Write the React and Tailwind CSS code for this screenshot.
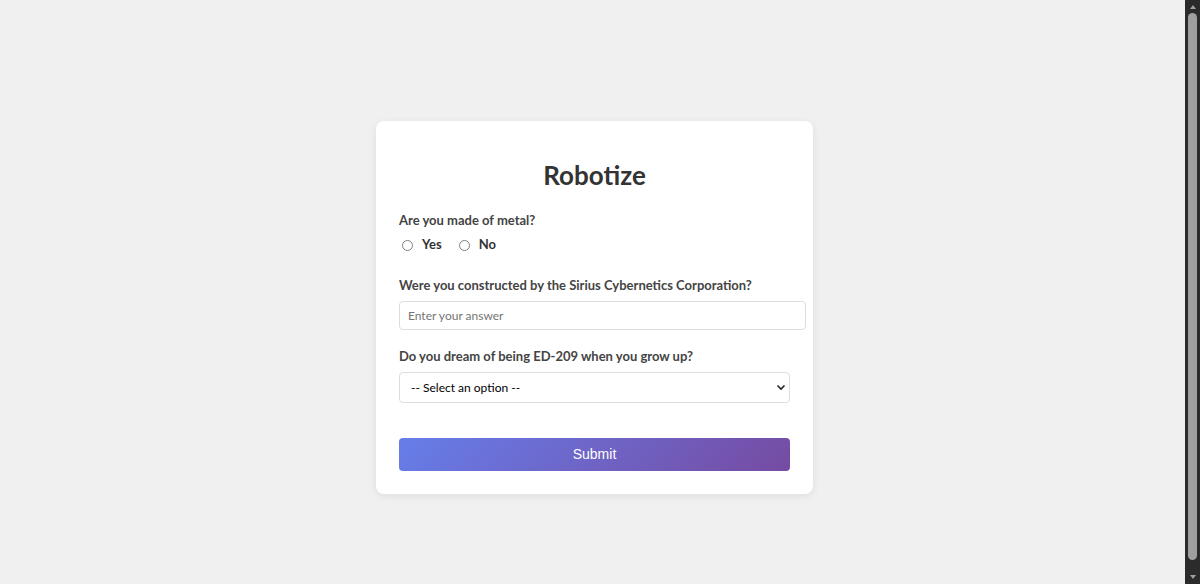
import React from "react";

const font = { fontFamily: "Lato, 'Open Sans', sans-serif" };

export default function App() {
  return (
    <div className="flex h-[584px] w-[1200px] overflow-hidden bg-[#f0f0f0]">
      <main className="flex-1 pl-[4px] pt-[121px]" style={font}>
        <form className="mx-auto w-[437px] rounded-lg bg-white px-[23px] pt-[37px] pb-[23px] shadow-[0_2px_8px_rgba(0,0,0,0.08)]">
          <h1 className="text-center text-[26px] font-bold leading-[34px] text-[#333]">Robotize</h1>

          <div className="mt-[20px]">
            <label className="block text-[13px] font-bold leading-[17px] text-[#444]">Are you made of metal?</label>
            <div className="mt-[7px] flex h-[18px] items-center text-[13px] font-bold text-[#333]">
              <label className="flex items-center">
                <input type="radio" name="metal" className="ml-[3px] h-[11px] w-[11px] appearance-none rounded-full border border-[#808080] bg-white" />
                <span className="ml-[9px]">Yes</span>
              </label>
              <label className="ml-[17px] flex items-center">
                <input type="radio" name="metal" className="h-[11px] w-[11px] appearance-none rounded-full border border-[#808080] bg-white" />
                <span className="ml-[9px]">No</span>
              </label>
            </div>
          </div>

          <div className="mt-[23px]">
            <label className="block text-[13px] font-bold leading-[17px] text-[#444]">Were you constructed by the Sirius Cybernetics Corporation?</label>
            <input
              type="text"
              placeholder="Enter your answer"
              className="mt-[7px] block h-[29px] w-[407px] rounded border border-[#dddddd] px-[8px] text-[12px] text-[#333] outline-none placeholder:text-[#757575]"
              style={font}
            />
          </div>

          <div className="mt-[18px]">
            <label className="block text-[13px] font-bold leading-[17px] text-[#444]">Do you dream of being ED-209 when you grow up?</label>
            <div className="relative mt-[7px]">
              <select
                className="block h-[31px] w-full appearance-none rounded border border-[#dddddd] bg-white pl-[11px] text-[12px] text-black outline-none"
                style={font}
                defaultValue=""
              >
                <option value="">-- Select an option --</option>
                <option value="yes">Yes</option>
                <option value="no">No</option>
              </select>
              <svg className="pointer-events-none absolute right-[4px] top-[12px]" width="10" height="7" viewBox="0 0 10 7">
                <path d="M1.5 1.5 L5 5 L8.5 1.5" fill="none" stroke="#222" strokeWidth="1.6" />
              </svg>
            </div>
          </div>

          <button
            type="button"
            className="mt-[35px] block h-[33px] w-full rounded bg-[linear-gradient(135deg,#667eea,#764ba2)] text-[14px] text-white"
            style={{ fontFamily: "'Liberation Sans', Arial, sans-serif" }}
          >
            Submit
          </button>
        </form>
      </main>

      <div className="flex w-[15px] flex-col items-center bg-[#2b2b2b] py-[2px]">
        <svg width="8" height="6" viewBox="0 0 8 6" className="mt-[2px]">
          <path d="M4 1 L7 5 L1 5 Z" fill="#a0a0a0" />
        </svg>
        <div className="mt-[3px] w-[9px] flex-1 rounded-full bg-[#9f9f9f]" />
        <svg width="8" height="6" viewBox="0 0 8 6" className="mt-[14px] mb-[2px]">
          <path d="M1 1 L7 1 L4 5 Z" fill="#a0a0a0" />
        </svg>
      </div>
    </div>
  );
}
